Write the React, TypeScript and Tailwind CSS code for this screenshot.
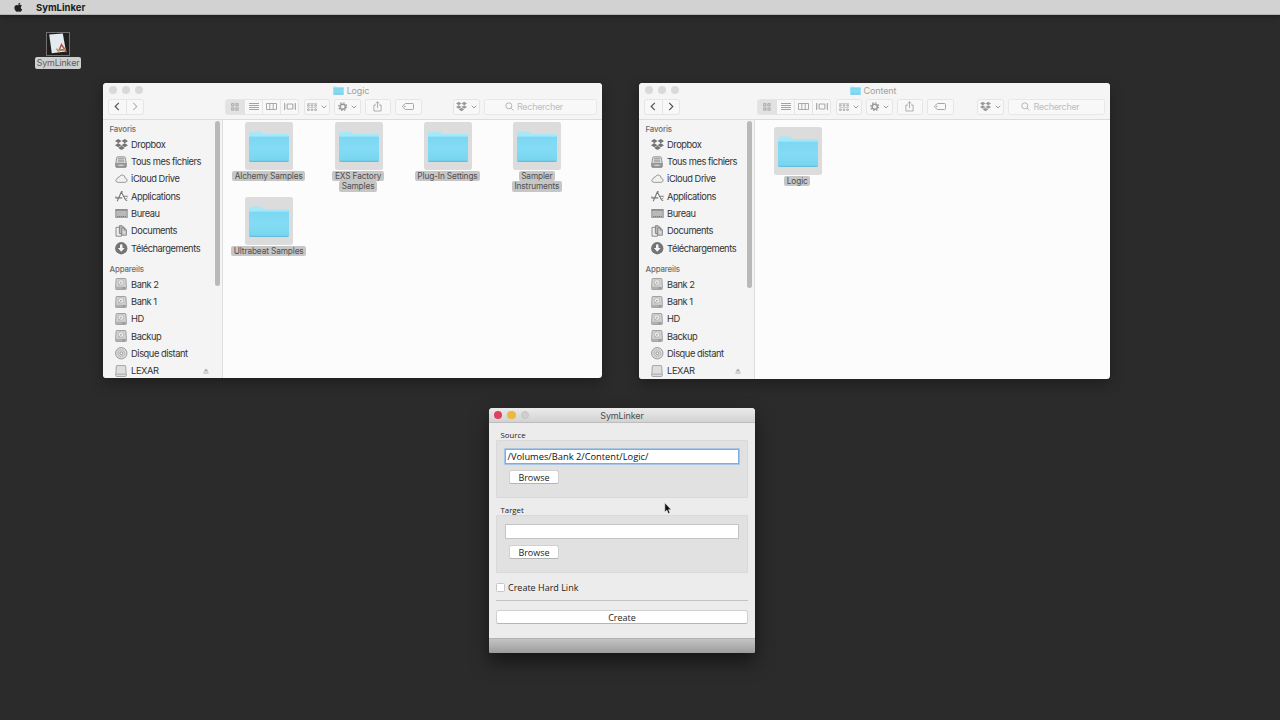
import type { ReactNode } from 'react';
import { FaApple, FaDropbox } from 'react-icons/fa';

function FolderIcon({ className }: { className: string }) {
  return (
    <svg viewBox="0 0 42 34" className={className} preserveAspectRatio="none">
      <defs>
        <linearGradient id="folderFront" x1="0" y1="0" x2="0" y2="1">
          <stop offset="0" stopColor="#7cd7f2" />
          <stop offset="0.5" stopColor="#84dcf4" />
          <stop offset="0.93" stopColor="#78d5f0" />
          <stop offset="1" stopColor="#5cb3cf" />
        </linearGradient>
      </defs>
      <path d="M1 3.5Q1 1.5 3 1.5H12Q13.5 1.5 14.5 3Q15.5 4.2 17 4.2H39Q41 4.2 41 6V10H1Z" fill="#a6e8fa" />
      <path d="M1 6.5H41V31.5Q41 33 39.5 33H2.5Q1 33 1 31.5Z" fill="url(#folderFront)" />
      <path d="M1 6.6H41" stroke="#9ae3f7" strokeWidth="0.8" />
    </svg>
  );
}

function Chevron() {
  return (
    <svg viewBox="0 0 6 4" className="h-[4px] w-[6px]" fill="none" stroke="#9c9c9c" strokeWidth="1">
      <path d="M0.7 0.7L3 3L5.3 0.7" />
    </svg>
  );
}

function ToolButton({ className = '', children }: { className?: string; children: ReactNode }) {
  return (
    <div
      className={`flex h-[16px] w-[26.5px] shrink-0 items-center justify-center gap-[4px] rounded-[2.5px] border border-[#e5e5e5] bg-[#f8f8f8] ${className}`}
    >
      {children}
    </div>
  );
}

function NavButtons({ forward }: { forward: boolean }) {
  return (
    <div className="flex h-[16px] w-[36px] shrink-0 rounded-[2.5px] border border-[#e5e5e5] bg-[#f8f8f8]">
      <div className="flex flex-1 items-center justify-center border-r border-[#e5e5e5]">
        <svg viewBox="0 0 6 9" className="h-[9px] w-[6px]" fill="none" stroke="#555" strokeWidth="1.2">
          <path d="M4.8 0.8L1.2 4.5L4.8 8.2" />
        </svg>
      </div>
      <div className="flex flex-1 items-center justify-center">
        <svg
          viewBox="0 0 6 9"
          className={`h-[9px] w-[6px] ${forward ? 'stroke-[#555]' : 'stroke-[#b9b9b9]'}`}
          fill="none"
          strokeWidth="1.2"
        >
          <path d="M1.2 0.8L4.8 4.5L1.2 8.2" />
        </svg>
      </div>
    </div>
  );
}

function ViewSwitch() {
  return (
    <div className="flex h-[16px] w-[74px] shrink-0 overflow-hidden rounded-[2.5px] border border-[#e5e5e5] bg-[#f8f8f8]">
      <div className="flex w-[19px] items-center justify-center bg-[#e2e2e2] pr-[2px]">
        <svg viewBox="0 0 8 8" className="size-[8px]" fill="none" stroke="#a2a2a2" strokeWidth="0.9">
          <rect x="0.7" y="0.7" width="2.2" height="2.2" />
          <rect x="4.9" y="0.7" width="2.2" height="2.2" />
          <rect x="0.7" y="4.9" width="2.2" height="2.2" />
          <rect x="4.9" y="4.9" width="2.2" height="2.2" />
        </svg>
      </div>
      <div className="flex w-[18px] items-center justify-center border-r border-[#e5e5e5]">
        <svg viewBox="0 0 10 8" className="h-[8px] w-[10px]" fill="#a3a3a3" shapeRendering="crispEdges">
          <path d="M0 0H10V1H0ZM0 2H10V3H0ZM0 4H10V5H0ZM0 6H10V7H0Z" />
        </svg>
      </div>
      <div className="flex w-[18px] items-center justify-center border-r border-[#e5e5e5]">
        <svg viewBox="0 0 11 7" className="h-[7px] w-[11px]" fill="none" stroke="#a0a0a0" strokeWidth="0.9">
          <path d="M0.5 0.5H10.5V6.5H0.5ZM3.8 0.5V6.5M7.2 0.5V6.5" />
        </svg>
      </div>
      <div className="flex flex-1 items-center justify-center">
        <svg viewBox="0 0 12 7" className="h-[7px] w-[12px]" fill="none" stroke="#a0a0a0" strokeWidth="0.9">
          <path d="M3.2 1H8.8V6H3.2ZM0.5 0V7M11.5 0V7" />
          <path d="M1.9 0.5V6.5M10.1 0.5V6.5" opacity="0.4" />
        </svg>
      </div>
    </div>
  );
}

function ArrangeIcon() {
  return (
    <svg viewBox="0 0 10 8" className="h-[8px] w-[10px]" fill="none" stroke="#a0a0a0" strokeWidth="0.8">
      <path d="M0 0.5H10M0 4.5H10" opacity="0.6" />
      <path d="M0.6 1.7H2.2V3.1H0.6ZM4.2 1.7H5.8V3.1H4.2ZM7.8 1.7H9.4V3.1H7.8ZM0.6 6H2.2V7.4H0.6ZM4.2 6H5.8V7.4H4.2ZM7.8 6H9.4V7.4H7.8Z" />
    </svg>
  );
}

function GearIcon() {
  return (
    <svg viewBox="0 0 10 10" className="size-[9.5px]" fill="none" stroke="#999">
      <circle cx="5" cy="5" r="2.7" strokeWidth="1.6" />
      <circle cx="5" cy="5" r="4.2" strokeWidth="1.4" strokeDasharray="1.5 1.8" />
    </svg>
  );
}

function ShareIcon() {
  return (
    <svg viewBox="0 0 9 11" className="h-[11px] w-[9px]" fill="none" stroke="#9c9c9c" strokeWidth="0.8">
      <path d="M3 4H0.9V10H8.1V4H6M4.5 7.2V0.9M2.7 2.5L4.5 0.8L6.3 2.5" />
    </svg>
  );
}

function TagIcon() {
  return (
    <svg viewBox="0 0 12 7" className="h-[7px] w-[12px]" fill="none" stroke="#9c9c9c" strokeWidth="0.9">
      <path d="M3.4 0.5H10.5Q11.5 0.5 11.5 1.5V5.5Q11.5 6.5 10.5 6.5H3.4L0.6 4Q0.3 3.5 0.6 3Z" />
      <circle cx="2.9" cy="3.5" r="0.4" />
    </svg>
  );
}

function AllFilesIcon() {
  return (
    <svg viewBox="0 0 12 12" className="size-[12px]" fill="none" stroke="#808080" strokeWidth="0.8">
      <path d="M2.8 0.8H9.2Q10 0.8 10.2 1.6L11.2 7V10.4Q11.2 11.3 10.3 11.3H1.7Q0.8 11.3 0.8 10.4V7L1.8 1.6Q2 0.8 2.8 0.8Z" fill="#dedede" />
      <path d="M3.2 2.6H8.8M3 4.2H9M2.8 5.8H9.2" strokeWidth="0.7" />
      <path d="M1 7.6H11V11H1Z" fill="#a3a3a3" />
      <path d="M3.8 9.3H8.2" stroke="#eee" />
    </svg>
  );
}

function CloudIcon() {
  return (
    <svg viewBox="0 0 13 10" className="h-[9.5px] w-[13px]" fill="#f0f0f0" stroke="#858585" strokeWidth="0.85">
      <path d="M3.2 8.8H10Q12.5 8.7 12.5 6.6Q12.4 4.9 10.5 4.6Q10.3 1.3 7.3 1Q5.2 1 4.4 3Q2.5 2.7 2.3 4.8Q0.5 5.2 0.5 6.9Q0.7 8.7 3.2 8.8Z" />
    </svg>
  );
}

function ApplicationsIcon() {
  return (
    <svg viewBox="0 0 13 11" className="h-[11px] w-[13px]" fill="none" stroke="#777" strokeWidth="1.1">
      <path d="M2.2 10.3L6.3 1L10.3 8.4Q10.8 9.6 12.2 9.4M0.3 6.9H7.2M9.4 5.2H12.6M6.3 1L7.6 0.6" />
      <path d="M0.4 5.2L2.4 7.2M12.4 6.8L10.9 8" strokeWidth="0.8" />
    </svg>
  );
}

function DesktopIcon() {
  return (
    <svg viewBox="0 0 13 10" className="h-[9.5px] w-[13px]">
      <rect x="0.5" y="0.5" width="12" height="9" fill="#b9b9b9" stroke="#8a8a8a" strokeWidth="0.9" />
      <path d="M0.5 1.2H12.5" stroke="#7d7d7d" strokeWidth="0.9" />
      <path d="M2 7.8H11" stroke="#757575" strokeWidth="1.1" strokeDasharray="1.2 0.75" />
    </svg>
  );
}

function DocumentsIcon() {
  return (
    <svg viewBox="0 0 12 12" className="size-[12px]" stroke="#7b7b7b" strokeWidth="0.85">
      <path d="M1 2.3H4.2L6.4 4.5V11.2H1Z" fill="#ededed" />
      <path d="M4.4 0.7H7.2L9 2.5V8.5H4.4Z" fill="#b9b9b9" />
      <path d="M6.8 2.8H9.3L11.4 4.8V10.2H6.8Z" fill="#d4d4d4" />
      <path d="M9.1 2.8V5H11.4" fill="none" />
    </svg>
  );
}

function DownloadIcon() {
  return (
    <svg viewBox="0 0 12 12" className="size-[12.5px]">
      <circle cx="6" cy="6" r="5.9" fill="#747474" />
      <path d="M4.8 2.5H7.2V5.8H9.3L6 9.3L2.7 5.8H4.8Z" fill="#f5f5f5" />
    </svg>
  );
}

function DriveIcon() {
  return (
    <svg viewBox="0 0 12 12" className="size-[12px]">
      <path d="M1.9 0.5H10.1Q10.8 0.5 10.9 1.2L11.4 8.6V10.8Q11.4 11.5 10.7 11.5H1.3Q0.6 11.5 0.6 10.8V8.6L1.1 1.2Q1.2 0.5 1.9 0.5Z" fill="#d2d2d2" stroke="#929292" strokeWidth="0.8" />
      <circle cx="6" cy="4.5" r="2.8" fill="#e9e9e9" stroke="#adadad" strokeWidth="0.7" />
      <circle cx="6" cy="4.4" r="0.7" fill="#999" />
      <path d="M6.2 4.8L3.2 7.6" stroke="#a5a5a5" strokeWidth="0.7" />
      <path d="M0.8 8.8H11.2V11.2H0.8Z" fill="#b0b0b0" />
      <path d="M7.5 10H9.8" stroke="#777" strokeWidth="0.8" />
    </svg>
  );
}

function DiscIcon() {
  return (
    <svg viewBox="0 0 12 12" className="size-[12.5px]" fill="none" stroke="#8e8e8e">
      <circle cx="6" cy="6" r="5.5" fill="#d8d8d8" strokeWidth="0.8" />
      <circle cx="6" cy="6" r="3.3" stroke="#ababab" strokeWidth="0.6" />
      <circle cx="6" cy="6" r="1.3" fill="#f4f4f4" strokeWidth="0.8" />
    </svg>
  );
}

function RemovableIcon() {
  return (
    <svg viewBox="0 0 12 12" className="size-[12px]">
      <path d="M2.1 0.5H9.9Q10.6 0.5 10.7 1.2L11.2 9V10.8Q11.2 11.5 10.5 11.5H1.5Q0.8 11.5 0.8 10.8V9L1.3 1.2Q1.4 0.5 2.1 0.5Z" fill="#dddddd" stroke="#979797" strokeWidth="0.8" />
      <path d="M0.9 9.2H11.1" stroke="#9c9c9c" strokeWidth="0.8" />
    </svg>
  );
}

const favorites: { label: string; icon: ReactNode }[] = [
  { label: 'Dropbox', icon: <FaDropbox className="size-[13px] text-[#747474]" /> },
  { label: 'Tous mes fichiers', icon: <AllFilesIcon /> },
  { label: 'iCloud Drive', icon: <CloudIcon /> },
  { label: 'Applications', icon: <ApplicationsIcon /> },
  { label: 'Bureau', icon: <DesktopIcon /> },
  { label: 'Documents', icon: <DocumentsIcon /> },
  { label: 'Téléchargements', icon: <DownloadIcon /> },
];

const devices: { label: string; icon: ReactNode; eject?: boolean }[] = [
  { label: 'Bank 2', icon: <DriveIcon /> },
  { label: 'Bank 1', icon: <DriveIcon /> },
  { label: 'HD', icon: <DriveIcon /> },
  { label: 'Backup', icon: <DriveIcon /> },
  { label: 'Disque distant', icon: <DiscIcon /> },
  { label: 'LEXAR', icon: <RemovableIcon />, eject: true },
];

function SidebarRow({ label, icon, eject }: { label: string; icon: ReactNode; eject?: boolean }) {
  return (
    <div className="flex h-[17.35px] items-center pl-[11.8px]">
      <span className="flex w-[13px] shrink-0 justify-center">{icon}</span>
      <span className="ml-[3.3px] flex-1 whitespace-nowrap text-[9.3px] leading-none tracking-[-0.45px] text-[#333]">{label}</span>
      {eject && (
        <svg viewBox="0 0 6 6" className="mr-[11px] h-[6px] w-[6px]" fill="#b0b0b0">
          <path d="M3 0.5L5.6 3.4H0.4ZM0.4 4.5H5.6V5.4H0.4Z" />
        </svg>
      )}
    </div>
  );
}

function SidebarHeading({ className, children }: { className: string; children: ReactNode }) {
  return (
    <div className={`flex items-end pl-[6.5px] text-[7.9px] font-medium leading-[12.5px] tracking-[-0.15px] text-[#6c6c6c] ${className}`}>
      {children}
    </div>
  );
}

function Sidebar({ className, thumbClass }: { className: string; thumbClass: string }) {
  return (
    <div className={`flex shrink-0 overflow-hidden border-r border-[#dedede] bg-[#f4f4f4] ${className}`}>
      <div className="min-w-0 flex-1">
        <SidebarHeading className="h-[15.6px]">Favoris</SidebarHeading>
        <div>
          {favorites.map((f) => (
            <SidebarRow key={f.label} {...f} />
          ))}
        </div>
        <SidebarHeading className="h-[18.6px]">Appareils</SidebarHeading>
        <div>
          {devices.map((d) => (
            <SidebarRow key={d.label} {...d} />
          ))}
        </div>
      </div>
      <div className={`-ml-[5px] mr-[2px] mt-[1px] w-[5px] rounded-full bg-[#b9b9b9] ${thumbClass}`} />
    </div>
  );
}

function FolderItem({ lines }: { lines: string[] }) {
  return (
    <div className="flex w-[89.4px] flex-col items-center">
      <div className="flex h-[48px] w-[48px] items-center justify-center rounded-[2.5px] bg-[#dddcdd] pt-[1px]">
        <FolderIcon className="h-[33px] w-[42px]" />
      </div>
      <div className="mt-[1px] flex flex-col items-center pr-[1px]">
        {lines.map((l) => (
          <span
            key={l}
            className="flex h-[10.4px] items-center whitespace-nowrap rounded-[2px] bg-[#c6c6c6] px-[2.5px] text-[8.3px] leading-none tracking-[-0.13px] text-[#505050]"
          >
            {l}
          </span>
        ))}
      </div>
    </div>
  );
}

type FinderProps = {
  title: string;
  frame: string;
  forward: boolean;
  viewMargin: string;
  dropboxMargin: string;
  searchPad: string;
  sidebarClass: string;
  thumbClass: string;
  children: ReactNode;
};

function FinderWindow(p: FinderProps) {
  return (
    <section
      className={`absolute flex flex-col overflow-hidden rounded-[3.5px] bg-[#fdfcfd] shadow-[0_5px_14px_rgba(0,0,0,0.3)] ${p.frame}`}
    >
      <header className="h-[37px] shrink-0 border-b border-[#dcdcdc] bg-[#f5f5f5]">
        <div className="grid h-[15px] grid-cols-[1fr_auto_1fr] items-center pb-[1px]">
          <div className="flex gap-[5px] pl-[5.5px]">
            <span className="size-[8.3px] rounded-full bg-[#d9d9d9]" />
            <span className="size-[8.3px] rounded-full bg-[#d9d9d9]" />
            <span className="size-[8.3px] rounded-full bg-[#d9d9d9]" />
          </div>
          <div className="flex items-center gap-[2.5px] pr-[2.5px] text-[9px] leading-none tracking-[-0.12px] text-[#a0a0a0]">
            <FolderIcon className="h-[9px] w-[11px]" />
            <span>{p.title}</span>
          </div>
        </div>
        <div className="flex items-center pl-[5px] pr-[5px] pt-[0.5px]">
          <NavButtons forward={p.forward} />
          <div className={`flex items-center ${p.viewMargin}`}>
            <ViewSwitch />
            <ToolButton className="ml-[4.5px]">
              <ArrangeIcon />
              <Chevron />
            </ToolButton>
            <ToolButton className="ml-[4px]">
              <GearIcon />
              <Chevron />
            </ToolButton>
            <ToolButton className="ml-[4px]">
              <ShareIcon />
            </ToolButton>
            <ToolButton className="ml-[4px]">
              <TagIcon />
            </ToolButton>
          </div>
          <ToolButton className={p.dropboxMargin}>
            <FaDropbox className="size-[11px] text-[#999]" />
            <Chevron />
          </ToolButton>
          <div
            className={`ml-[4px] flex h-[16px] flex-1 items-center rounded-[2.5px] border border-[#e8e8e8] bg-[#f8f8f8] ${p.searchPad}`}
          >
            <svg viewBox="0 0 9 9" className="size-[9px]" fill="none" stroke="#adadad" strokeWidth="0.9">
              <circle cx="3.8" cy="3.8" r="3" />
              <path d="M6 6L8.4 8.4" />
            </svg>
            <span className="ml-[3.5px] text-[9px] leading-none tracking-[-0.3px] text-[#bdbdbd]">Rechercher</span>
          </div>
        </div>
      </header>
      <div className="flex min-h-0 flex-1">
        <Sidebar className={p.sidebarClass} thumbClass={p.thumbClass} />
        {p.children}
      </div>
    </section>
  );
}

function PushButton({ className, children }: { className: string; children: ReactNode }) {
  return (
    <button
      className={`flex items-center justify-center rounded-[2.5px] border border-[#d0d0d0] border-b-[#b5b5b5] bg-white text-[9px] font-medium leading-none text-[#1c1c1c] ${className}`}
    >
      {children}
    </button>
  );
}

function PathGroup({ label, value, focused, className }: { label: string; value: string; focused?: boolean; className: string }) {
  return (
    <div className={className}>
      <div className="h-[10px] pl-[4.5px] text-[7.8px] font-medium leading-[10px] text-[#222]">{label}</div>
      <div className="h-[58px] rounded-[1px] border border-[#d9d9d9] bg-[#e1e1e1] pl-[7.5px] pr-[8px] pt-[8px]">
        <div
          className={`flex h-[15px] items-center border bg-white pl-[2px] text-[9.3px] font-medium leading-none text-[#111] ${
            focused ? 'border-[#7badE2] pt-[1px] shadow-[0_0_0_0.7px_#8fbbe8]' : 'border-[#c4c4c4]'
          }`}
        >
          {value}
        </div>
        <PushButton className="ml-[4.5px] mt-[6px] h-[14px] w-[50px]">Browse</PushButton>
      </div>
    </div>
  );
}

function SymLinkerDialog() {
  return (
    <section className="absolute left-[489px] top-[408px] flex h-[245px] w-[266px] flex-col overflow-hidden rounded-t-[3.5px] rounded-b-[2.5px] bg-[#ececec] font-['Open_Sans',sans-serif] shadow-[0_9px_18px_rgba(0,0,0,0.5)]">
      <header className="grid h-[15px] shrink-0 grid-cols-[1fr_auto_1fr] items-center border-b border-[#bdbdbd] bg-linear-to-b from-[#ebebeb] to-[#d2d2d2]">
        <div className="flex gap-[5px] pl-[5px]">
          <span className="size-[8.3px] rounded-full bg-[#e0405f]" />
          <span className="size-[8.3px] rounded-full bg-[#edb840]" />
          <span className="size-[8.3px] rounded-full border border-[#c4c4c4] bg-[#cfcfcf]" />
        </div>
        <span className="font-['Inter',sans-serif] text-[9px] leading-none tracking-[-0.15px] text-[#4c4c4c]">SymLinker</span>
      </header>
      <div className="flex flex-1 flex-col px-[7px] pt-[7px]">
        <PathGroup className="" label="Source" value="/Volumes/Bank 2/Content/Logic/" focused />
        <PathGroup className="mt-[7px]" label="Target" value="" />
        <div className="mt-[9.5px] flex h-[10px] items-center">
          <span className="size-[9px] rounded-[1.5px] border border-[#c6c6c6] bg-white" />
          <span className="ml-[3px] text-[9px] font-medium leading-none text-[#222]">Create Hard Link</span>
        </div>
        <div className="mt-[7.5px] h-px bg-[#c3c3c3]" />
        <PushButton className="mt-[9.4px] h-[14px] w-full">Create</PushButton>
      </div>
      <div className="h-[15px] shrink-0 border-t border-[#b0b0b0] bg-linear-to-b from-[#c4c4c4] to-[#9c9c9c]" />
    </section>
  );
}

export default function App() {
  return (
    <div className="relative flex h-[720px] w-[1280px] flex-col overflow-hidden bg-[#2b2b2b] font-['Inter','Liberation_Sans',sans-serif]">
      <nav className="flex h-[15px] shrink-0 items-center border-b border-[#b4b4b4] bg-[#d3d2d3] pl-[13px] shadow-[0_1px_5px_rgba(0,0,0,0.35)]">
        <FaApple className="size-[10.5px] text-[#222]" />
        <span className="ml-[12.5px] pt-[0.8px] text-[9.5px] font-bold leading-none text-[#1c1c1c]">SymLinker</span>
      </nav>

      <div className="absolute left-[28px] top-[32px] flex w-[60px] flex-col items-center">
        <svg viewBox="0 0 24 24" className="size-[24px]">
          <rect x="0.5" y="0.5" width="23" height="23" fill="#1f1f20" stroke="#707070" />
          <path d="M3.2 2.6L16.8 1.6L20 19.6L5.8 21.2Z" fill="#e3eaf0" />
          <path d="M11 18.5L19 17.5M12.5 19.5L15.5 12.5L20.5 20" fill="none" stroke="#a5584c" strokeWidth="1.5" />
          <path d="M10 17L14 18.5M16.5 19L19.5 17" stroke="#c8a54e" strokeWidth="1.4" />
        </svg>
        <span className="mt-[1px] flex h-[12px] items-center rounded-[2px] bg-[#cfcfcf] px-[2px] text-[8.9px] leading-none tracking-[-0.15px] text-[#5c5c5c]">
          SymLinker
        </span>
      </div>

      <FinderWindow
        title="Logic"
        frame="left-[103px] top-[83px] h-[295px] w-[499px]"
        forward={false}
        viewMargin="ml-[81px]"
        dropboxMargin="ml-[31.5px]"
        searchPad="pl-[20px]"
        sidebarClass="w-[120px]"
        thumbClass="h-[165px]"
      >
        <div className="grid flex-1 grid-cols-[repeat(4,89.4px)] content-start gap-y-[5px] pl-[1.5px] pt-[2px]">
          <FolderItem lines={['Alchemy Samples']} />
          <FolderItem lines={['EXS Factory', 'Samples']} />
          <FolderItem lines={['Plug-In Settings']} />
          <FolderItem lines={['Sampler', 'Instruments']} />
          <FolderItem lines={['Ultrabeat Samples']} />
        </div>
      </FinderWindow>

      <FinderWindow
        title="Content"
        frame="left-[639px] top-[83px] h-[296px] w-[471px]"
        forward
        viewMargin="ml-[77px]"
        dropboxMargin="ml-[23.5px]"
        searchPad="pl-[12.5px]"
        sidebarClass="w-[116px]"
        thumbClass="h-[167px]"
      >
        <div className="-ml-[2px] flex flex-1 items-start pt-[7px]">
          <FolderItem lines={['Logic']} />
        </div>
      </FinderWindow>

      <SymLinkerDialog />

      <svg viewBox="0 0 8 13" className="absolute left-[664px] top-[502px] h-[13px] w-[8px]">
        <path d="M0.8 0.8V10L2.9 8.2L4.3 11.6L6 10.9L4.6 7.7H7.2Z" fill="#111" stroke="#eee" strokeWidth="0.6" />
      </svg>
    </div>
  );
}
